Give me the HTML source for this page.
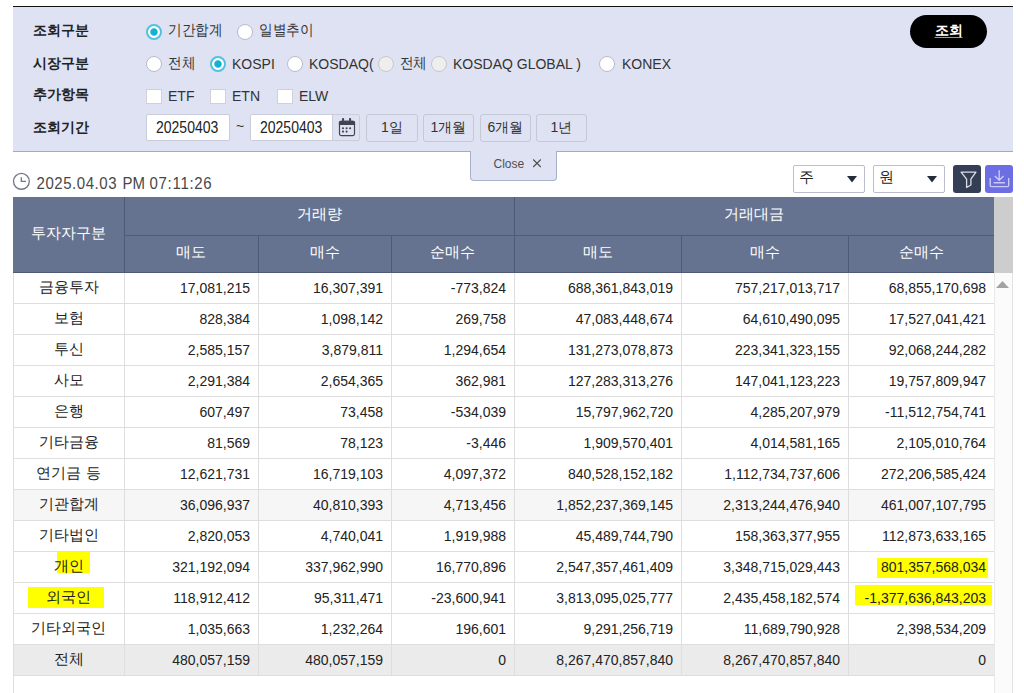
<!DOCTYPE html><html><head><meta charset="utf-8"><style>
*{margin:0;padding:0;box-sizing:border-box}
html,body{width:1024px;height:693px;overflow:hidden;background:#fff;font-family:"Liberation Sans",sans-serif;color:#222}
.a{position:absolute}
.lbl{font-size:14px;font-weight:bold;color:#222;line-height:18px;white-space:nowrap}
.t{font-size:14px;line-height:17px;color:#333;white-space:nowrap}
.k{transform:scaleY(1.1);letter-spacing:-0.4px;transform-origin:0 9px}
.rad{width:16px;height:16px;border-radius:50%;background:#fff;border:1px solid #b9bbc6}
.rad.on{border:2px solid #4fc3dc;background:radial-gradient(circle at 50% 50%,#12b1d6 0,#12b1d6 3.3px,#fff 4.1px)}

.rad.dis{background:#eeeeee;border-color:#c8c8c8}
.chk{width:16px;height:15px;background:#fff;border:1px solid #d0d1d8}
.inp{height:27px;background:#fff;border:1px solid #c9ccda;border-radius:2px;font-size:14px;line-height:25px;color:#222;padding-left:9px}
.pbtn{height:28px;border:1px solid #c5c8d6;border-radius:3px;font-size:14px;line-height:24px;text-align:center;color:#333}
.c0{position:absolute;text-align:center;font-size:14.5px;line-height:29px;color:#222;white-space:nowrap}
.cn{position:absolute;text-align:right;padding-right:8px;font-size:14px;line-height:31px;color:#222;white-space:nowrap}
.ht{position:absolute;text-align:center;color:#fff;font-size:14.5px;line-height:17px;white-space:nowrap}
</style></head><body>
<div class="a" style="left:13px;top:6px;width:1000px;height:146px;background:#dfe2f2;border-top:1px solid #111;border-bottom:1px solid #a2a9cb"></div>
<div class="a lbl" style="left:33px;top:21px">조회구분</div>
<div class="a lbl" style="left:33px;top:54px">시장구분</div>
<div class="a lbl" style="left:33px;top:85px">추가항목</div>
<div class="a lbl" style="left:33px;top:118px">조회기간</div>
<div class="a rad on" style="left:146px;top:23.5px"></div>
<div class="a t k" style="left:168px;top:22px;">기간합계</div>
<div class="a rad " style="left:237px;top:23.5px"></div>
<div class="a t k" style="left:259px;top:22px;">일별추이</div>
<div class="a rad " style="left:146px;top:55.5px"></div>
<div class="a t k" style="left:168px;top:54.5px;">전체</div>
<div class="a rad on" style="left:210px;top:55.5px"></div>
<div class="a t" style="left:232px;top:55.5px;">KOSPI</div>
<div class="a rad " style="left:287px;top:55.5px"></div>
<div class="a t" style="left:309px;top:55.5px;">KOSDAQ(</div>
<div class="a rad dis" style="left:378px;top:55.5px"></div>
<div class="a t k" style="left:399.5px;top:54.5px;">전체</div>
<div class="a rad dis" style="left:431px;top:55.5px"></div>
<div class="a t" style="left:453px;top:55.5px;">KOSDAQ GLOBAL )</div>
<div class="a rad " style="left:599px;top:55.5px"></div>
<div class="a t" style="left:622px;top:55.5px;">KONEX</div>
<div class="a chk" style="left:146px;top:89px"></div>
<div class="a t" style="left:168px;top:88px;">ETF</div>
<div class="a chk" style="left:210px;top:89px"></div>
<div class="a t" style="left:232px;top:88px;">ETN</div>
<div class="a chk" style="left:277px;top:89px"></div>
<div class="a t" style="left:299px;top:88px;">ELW</div>
<div class="a inp" style="left:146px;top:114px;width:84px"><span style="display:inline-block;transform:translateY(1.5px) scaleY(1.15);transform-origin:0 18px">20250403</span></div>
<div class="a t" style="left:236px;top:118px;">~</div>
<div class="a inp" style="left:250px;top:114px;width:110px;border-radius:2px"></div>
<div class="a" style="left:251px;top:115px;width:81px;height:25px;background:#fff;font-size:14px;line-height:25px;color:#222;padding-left:9px"><span style="display:inline-block;transform:translateY(1.5px) scaleY(1.15);transform-origin:0 18px">20250403</span></div>
<div class="a" style="left:332px;top:115px;width:27px;height:25px;background:#dfe2f2;border-left:1px solid #c9ccda"></div>
<svg class="a" style="left:334px;top:114px" width="26" height="26" viewBox="0 0 26 26">
<rect x="5.5" y="7.3" width="15" height="14.3" rx="1.8" fill="none" stroke="#40454f" stroke-width="1.2"/>
<path d="M4.9 10.9 V8.6 Q4.9 6.7 6.8 6.7 H19.2 Q21.1 6.7 21.1 8.6 V10.9 Z" fill="#40454f"/>
<rect x="8" y="4.1" width="2.1" height="3" rx="0.8" fill="#40454f"/><rect x="15" y="4.1" width="2.1" height="3" rx="0.8" fill="#40454f"/>
<circle cx="9" cy="14.3" r="1.05" fill="#40454f"/><circle cx="12.6" cy="14.3" r="1.05" fill="#40454f"/><circle cx="16.1" cy="14.3" r="1.05" fill="#40454f"/>
<circle cx="9" cy="17.6" r="1.05" fill="#40454f"/><circle cx="12.6" cy="17.6" r="1.05" fill="#40454f"/>
</svg>
<div class="a pbtn" style="left:366px;top:114px;width:52px">1일</div>
<div class="a pbtn" style="left:423px;top:114px;width:51px">1개월</div>
<div class="a pbtn" style="left:480px;top:114px;width:51px">6개월</div>
<div class="a pbtn" style="left:536px;top:114px;width:51px">1년</div>
<div class="a" style="left:910px;top:15px;width:77px;height:33px;border-radius:17px;background:#000;color:#fff;font-size:14px;font-weight:bold;text-align:center;line-height:31px"><span style="text-decoration:underline;text-decoration-color:#9a9a9a;text-underline-offset:1.5px">조회</span></div>
<div class="a" style="left:470px;top:151px;width:87px;height:30px;background:#dfe2f2;border:1px solid #a9b0cc;border-top:0;border-radius:0 0 4px 4px;font-size:12px;line-height:27px;color:#505050;padding-left:22.5px">Close</div>
<svg class="a" style="left:530px;top:157px" width="14" height="12" viewBox="0 0 14 12"><path d="M3.2 2.5 L10.8 10 M10.8 2.5 L3.2 10" stroke="#505050" stroke-width="1.1"/></svg>
<svg class="a" style="left:12px;top:172px" width="19" height="19" viewBox="0 0 19 19">
<circle cx="9.4" cy="9.35" r="7.9" fill="none" stroke="#6f7789" stroke-width="1.3"/>
<path d="M9.3 5.2 V9.3 H14" fill="none" stroke="#6f7789" stroke-width="1.3"/>
</svg>
<div class="a" style="left:36.5px;top:174.5px;font-size:15px;line-height:18px;color:#484848;white-space:nowrap;transform:scaleY(1.12);transform-origin:0 12px;letter-spacing:0.55px">2025.04.03</div>
<div class="a" style="left:122.5px;top:174.5px;font-size:15px;line-height:18px;color:#484848;white-space:nowrap;transform:scaleY(1.12);transform-origin:0 12px">PM</div>
<div class="a" style="left:149.5px;top:174.5px;font-size:15px;line-height:18px;color:#484848;white-space:nowrap;transform:scaleY(1.12);transform-origin:0 12px;letter-spacing:0.7px">07:11:26</div>
<div class="a" style="left:793px;top:165px;width:72px;height:28px;border:1px solid #b9bdcc;border-radius:2px;background:#fff;font-size:15px;line-height:22px;padding-left:5px;color:#222">주</div>
<svg class="a" style="left:847px;top:176px" width="10" height="7" viewBox="0 0 10 7"><path d="M0 0 H10 L5 6.6 Z" fill="#262b3a"/></svg>
<div class="a" style="left:873px;top:165px;width:72px;height:28px;border:1px solid #b9bdcc;border-radius:2px;background:#fff;font-size:15px;line-height:22px;padding-left:5px;color:#222">원</div>
<svg class="a" style="left:927px;top:176px" width="10" height="7" viewBox="0 0 10 7"><path d="M0 0 H10 L5 6.6 Z" fill="#262b3a"/></svg>
<div class="a" style="left:953px;top:165px;width:28px;height:28px;border-radius:3px;background:#343f55"></div>
<svg class="a" style="left:953px;top:165px" width="28" height="28" viewBox="0 0 28 28">
<path d="M8.1 7.2 H22.9 L17.9 14.2 V20 L13.6 22.5 V14.2 Z" fill="none" stroke="#dcdee6" stroke-width="1.3" stroke-linejoin="round"/>
</svg>
<div class="a" style="left:985px;top:165px;width:28px;height:28px;border-radius:3px;background:#6d6de4"></div>
<svg class="a" style="left:985px;top:165px" width="28" height="28" viewBox="0 0 28 28">
<path d="M5.2 13 V20.2 Q5.2 21.6 6.6 21.6 H22.3 Q23.7 21.6 23.7 20.2 V13" fill="none" stroke="#cacaf6" stroke-width="1.4"/>
<path d="M14.2 5.2 V15 M9.9 11 L14.2 15.3 L18.5 11 M8.6 17.7 H20" fill="none" stroke="#cacaf6" stroke-width="1.4"/>
</svg>
<div class="a" style="left:13px;top:197px;width:981px;height:76px;background:#667390"></div>
<div class="a" style="left:124px;top:197px;width:1px;height:76px;background:#4f5a76"></div>
<div class="a" style="left:514px;top:197px;width:1px;height:76px;background:#4f5a76"></div>
<div class="a" style="left:124px;top:235px;width:870px;height:1px;background:#4f5a76"></div>
<div class="a" style="left:258px;top:235px;width:1px;height:38px;background:#4f5a76"></div>
<div class="a" style="left:391px;top:235px;width:1px;height:38px;background:#4f5a76"></div>
<div class="a" style="left:681px;top:235px;width:1px;height:38px;background:#4f5a76"></div>
<div class="a" style="left:848px;top:235px;width:1px;height:38px;background:#4f5a76"></div>
<div class="a" style="left:13px;top:272px;width:981px;height:1px;background:#4f5a76"></div>
<div class="ht" style="left:13px;top:225px;width:111px">투자자구분</div>
<div class="ht" style="left:124px;top:206px;width:390px">거래량</div>
<div class="ht" style="left:514px;top:206px;width:480px">거래대금</div>
<div class="ht" style="left:124px;top:243.5px;width:134px">매도</div>
<div class="ht" style="left:258px;top:243.5px;width:133px">매수</div>
<div class="ht" style="left:391px;top:243.5px;width:123px">순매수</div>
<div class="ht" style="left:514px;top:243.5px;width:167px">매도</div>
<div class="ht" style="left:681px;top:243.5px;width:167px">매수</div>
<div class="ht" style="left:848px;top:243.5px;width:146px">순매수</div>
<div class="a" style="left:13px;top:303px;width:981px;height:1px;background:#dedede"></div>
<div class="a" style="left:13px;top:334px;width:981px;height:1px;background:#dedede"></div>
<div class="a" style="left:13px;top:365px;width:981px;height:1px;background:#dedede"></div>
<div class="a" style="left:13px;top:396px;width:981px;height:1px;background:#dedede"></div>
<div class="a" style="left:13px;top:427px;width:981px;height:1px;background:#dedede"></div>
<div class="a" style="left:13px;top:458px;width:981px;height:1px;background:#dedede"></div>
<div class="a" style="left:13px;top:489px;width:981px;height:1px;background:#dedede"></div>
<div class="a" style="left:13px;top:490px;width:981px;height:31px;background:#f6f6f6"></div>
<div class="a" style="left:13px;top:520px;width:981px;height:1px;background:#dedede"></div>
<div class="a" style="left:13px;top:551px;width:981px;height:1px;background:#dedede"></div>
<div class="a" style="left:13px;top:582px;width:981px;height:1px;background:#dedede"></div>
<div class="a" style="left:13px;top:613px;width:981px;height:1px;background:#dedede"></div>
<div class="a" style="left:13px;top:644px;width:981px;height:1px;background:#dedede"></div>
<div class="a" style="left:13px;top:645px;width:981px;height:31px;background:#ebebeb"></div>
<div class="a" style="left:13px;top:675px;width:981px;height:1px;background:#dedede"></div>
<div class="a" style="left:13px;top:273px;width:1px;height:403px;background:#dedede"></div>
<div class="a" style="left:124px;top:273px;width:1px;height:403px;background:#dedede"></div>
<div class="a" style="left:258px;top:273px;width:1px;height:403px;background:#dedede"></div>
<div class="a" style="left:391px;top:273px;width:1px;height:403px;background:#dedede"></div>
<div class="a" style="left:514px;top:273px;width:1px;height:403px;background:#dedede"></div>
<div class="a" style="left:681px;top:273px;width:1px;height:403px;background:#dedede"></div>
<div class="a" style="left:848px;top:273px;width:1px;height:403px;background:#dedede"></div>
<div class="a" style="left:13px;top:273px;width:1px;height:420px;background:#dedede"></div>
<div class="a" style="left:57px;top:552px;width:33px;height:20.5px;background:#ffff00"></div>
<div class="a" style="left:28px;top:587px;width:76px;height:21px;background:#ffff00"></div>
<div class="a" style="left:876.7px;top:558px;width:111.29999999999995px;height:20.399999999999977px;background:#ffff00"></div>
<div class="a" style="left:855px;top:584.7px;width:137.29999999999995px;height:20.299999999999955px;background:#ffff00"></div>
<div class="c0" style="left:13px;top:273px;width:111px">금융투자</div>
<div class="cn" style="left:124px;top:273px;width:134px">17,081,215</div>
<div class="cn" style="left:258px;top:273px;width:133px">16,307,391</div>
<div class="cn" style="left:391px;top:273px;width:123px">-773,824</div>
<div class="cn" style="left:514px;top:273px;width:167px">688,361,843,019</div>
<div class="cn" style="left:681px;top:273px;width:167px">757,217,013,717</div>
<div class="cn" style="left:848px;top:273px;width:146px">68,855,170,698</div>
<div class="c0" style="left:13px;top:304px;width:111px">보험</div>
<div class="cn" style="left:124px;top:304px;width:134px">828,384</div>
<div class="cn" style="left:258px;top:304px;width:133px">1,098,142</div>
<div class="cn" style="left:391px;top:304px;width:123px">269,758</div>
<div class="cn" style="left:514px;top:304px;width:167px">47,083,448,674</div>
<div class="cn" style="left:681px;top:304px;width:167px">64,610,490,095</div>
<div class="cn" style="left:848px;top:304px;width:146px">17,527,041,421</div>
<div class="c0" style="left:13px;top:335px;width:111px">투신</div>
<div class="cn" style="left:124px;top:335px;width:134px">2,585,157</div>
<div class="cn" style="left:258px;top:335px;width:133px">3,879,811</div>
<div class="cn" style="left:391px;top:335px;width:123px">1,294,654</div>
<div class="cn" style="left:514px;top:335px;width:167px">131,273,078,873</div>
<div class="cn" style="left:681px;top:335px;width:167px">223,341,323,155</div>
<div class="cn" style="left:848px;top:335px;width:146px">92,068,244,282</div>
<div class="c0" style="left:13px;top:366px;width:111px">사모</div>
<div class="cn" style="left:124px;top:366px;width:134px">2,291,384</div>
<div class="cn" style="left:258px;top:366px;width:133px">2,654,365</div>
<div class="cn" style="left:391px;top:366px;width:123px">362,981</div>
<div class="cn" style="left:514px;top:366px;width:167px">127,283,313,276</div>
<div class="cn" style="left:681px;top:366px;width:167px">147,041,123,223</div>
<div class="cn" style="left:848px;top:366px;width:146px">19,757,809,947</div>
<div class="c0" style="left:13px;top:397px;width:111px">은행</div>
<div class="cn" style="left:124px;top:397px;width:134px">607,497</div>
<div class="cn" style="left:258px;top:397px;width:133px">73,458</div>
<div class="cn" style="left:391px;top:397px;width:123px">-534,039</div>
<div class="cn" style="left:514px;top:397px;width:167px">15,797,962,720</div>
<div class="cn" style="left:681px;top:397px;width:167px">4,285,207,979</div>
<div class="cn" style="left:848px;top:397px;width:146px">-11,512,754,741</div>
<div class="c0" style="left:13px;top:428px;width:111px">기타금융</div>
<div class="cn" style="left:124px;top:428px;width:134px">81,569</div>
<div class="cn" style="left:258px;top:428px;width:133px">78,123</div>
<div class="cn" style="left:391px;top:428px;width:123px">-3,446</div>
<div class="cn" style="left:514px;top:428px;width:167px">1,909,570,401</div>
<div class="cn" style="left:681px;top:428px;width:167px">4,014,581,165</div>
<div class="cn" style="left:848px;top:428px;width:146px">2,105,010,764</div>
<div class="c0" style="left:13px;top:459px;width:111px">연기금 등</div>
<div class="cn" style="left:124px;top:459px;width:134px">12,621,731</div>
<div class="cn" style="left:258px;top:459px;width:133px">16,719,103</div>
<div class="cn" style="left:391px;top:459px;width:123px">4,097,372</div>
<div class="cn" style="left:514px;top:459px;width:167px">840,528,152,182</div>
<div class="cn" style="left:681px;top:459px;width:167px">1,112,734,737,606</div>
<div class="cn" style="left:848px;top:459px;width:146px">272,206,585,424</div>
<div class="c0" style="left:13px;top:490px;width:111px">기관합계</div>
<div class="cn" style="left:124px;top:490px;width:134px">36,096,937</div>
<div class="cn" style="left:258px;top:490px;width:133px">40,810,393</div>
<div class="cn" style="left:391px;top:490px;width:123px">4,713,456</div>
<div class="cn" style="left:514px;top:490px;width:167px">1,852,237,369,145</div>
<div class="cn" style="left:681px;top:490px;width:167px">2,313,244,476,940</div>
<div class="cn" style="left:848px;top:490px;width:146px">461,007,107,795</div>
<div class="c0" style="left:13px;top:521px;width:111px">기타법인</div>
<div class="cn" style="left:124px;top:521px;width:134px">2,820,053</div>
<div class="cn" style="left:258px;top:521px;width:133px">4,740,041</div>
<div class="cn" style="left:391px;top:521px;width:123px">1,919,988</div>
<div class="cn" style="left:514px;top:521px;width:167px">45,489,744,790</div>
<div class="cn" style="left:681px;top:521px;width:167px">158,363,377,955</div>
<div class="cn" style="left:848px;top:521px;width:146px">112,873,633,165</div>
<div class="c0" style="left:13px;top:552px;width:111px">개인</div>
<div class="cn" style="left:124px;top:552px;width:134px">321,192,094</div>
<div class="cn" style="left:258px;top:552px;width:133px">337,962,990</div>
<div class="cn" style="left:391px;top:552px;width:123px">16,770,896</div>
<div class="cn" style="left:514px;top:552px;width:167px">2,547,357,461,409</div>
<div class="cn" style="left:681px;top:552px;width:167px">3,348,715,029,443</div>
<div class="cn" style="left:848px;top:552px;width:146px">801,357,568,034</div>
<div class="c0" style="left:13px;top:583px;width:111px">외국인</div>
<div class="cn" style="left:124px;top:583px;width:134px">118,912,412</div>
<div class="cn" style="left:258px;top:583px;width:133px">95,311,471</div>
<div class="cn" style="left:391px;top:583px;width:123px">-23,600,941</div>
<div class="cn" style="left:514px;top:583px;width:167px">3,813,095,025,777</div>
<div class="cn" style="left:681px;top:583px;width:167px">2,435,458,182,574</div>
<div class="cn" style="left:848px;top:583px;width:146px">-1,377,636,843,203</div>
<div class="c0" style="left:13px;top:614px;width:111px">기타외국인</div>
<div class="cn" style="left:124px;top:614px;width:134px">1,035,663</div>
<div class="cn" style="left:258px;top:614px;width:133px">1,232,264</div>
<div class="cn" style="left:391px;top:614px;width:123px">196,601</div>
<div class="cn" style="left:514px;top:614px;width:167px">9,291,256,719</div>
<div class="cn" style="left:681px;top:614px;width:167px">11,689,790,928</div>
<div class="cn" style="left:848px;top:614px;width:146px">2,398,534,209</div>
<div class="c0" style="left:13px;top:645px;width:111px">전체</div>
<div class="cn" style="left:124px;top:645px;width:134px">480,057,159</div>
<div class="cn" style="left:258px;top:645px;width:133px">480,057,159</div>
<div class="cn" style="left:391px;top:645px;width:123px">0</div>
<div class="cn" style="left:514px;top:645px;width:167px">8,267,470,857,840</div>
<div class="cn" style="left:681px;top:645px;width:167px">8,267,470,857,840</div>
<div class="cn" style="left:848px;top:645px;width:146px">0</div>
<div class="a" style="left:994px;top:197px;width:19px;height:76px;background:#cdcdcd"></div>
<div class="a" style="left:994px;top:273px;width:19px;height:420px;background:#fbfbfb;border-left:1px solid #e8e8e8;border-right:1px solid #e3e3e3"></div>
<svg class="a" style="left:996px;top:281px" width="13" height="7" viewBox="0 0 13 7"><path d="M0 7 L6.5 0 L13 7 Z" fill="#a3a3a3"/></svg>
</body></html>
